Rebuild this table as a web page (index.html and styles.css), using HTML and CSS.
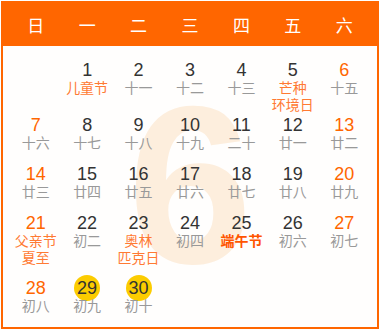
FILE: index.html
```html
<!DOCTYPE html>
<html lang="zh-CN">
<head>
<meta charset="utf-8">
<title>六月</title>
<link rel="stylesheet" href="styles.css">
</head>
<body>
<div class="cal">
  <div class="head">
    <span>日</span><span>一</span><span>二</span><span>三</span><span>四</span><span>五</span><span>六</span>
  </div>
  <div class="body">
    <div class="mark">6</div>
    <div class="grid">
      <div class="week w1">
        <div class="day"></div>
        <div class="day"><div class="num">1</div><div class="lunar fest">儿童节</div></div>
        <div class="day"><div class="num">2</div><div class="lunar">十一</div></div>
        <div class="day"><div class="num">3</div><div class="lunar">十二</div></div>
        <div class="day"><div class="num">4</div><div class="lunar">十三</div></div>
        <div class="day"><div class="num">5</div><div class="lunar fest">芒种<br>环境日</div></div>
        <div class="day"><div class="num we">6</div><div class="lunar">十五</div></div>
      </div>
      <div class="week">
        <div class="day"><div class="num we">7</div><div class="lunar">十六</div></div>
        <div class="day"><div class="num">8</div><div class="lunar">十七</div></div>
        <div class="day"><div class="num">9</div><div class="lunar">十八</div></div>
        <div class="day"><div class="num">10</div><div class="lunar">十九</div></div>
        <div class="day"><div class="num">11</div><div class="lunar">二十</div></div>
        <div class="day"><div class="num">12</div><div class="lunar">廿一</div></div>
        <div class="day"><div class="num we">13</div><div class="lunar">廿二</div></div>
      </div>
      <div class="week">
        <div class="day"><div class="num we">14</div><div class="lunar">廿三</div></div>
        <div class="day"><div class="num">15</div><div class="lunar">廿四</div></div>
        <div class="day"><div class="num">16</div><div class="lunar">廿五</div></div>
        <div class="day"><div class="num">17</div><div class="lunar">廿六</div></div>
        <div class="day"><div class="num">18</div><div class="lunar">廿七</div></div>
        <div class="day"><div class="num">19</div><div class="lunar">廿八</div></div>
        <div class="day"><div class="num we">20</div><div class="lunar">廿九</div></div>
      </div>
      <div class="week w4">
        <div class="day"><div class="num we">21</div><div class="lunar fest">父亲节<br>夏至</div></div>
        <div class="day"><div class="num">22</div><div class="lunar">初二</div></div>
        <div class="day"><div class="num">23</div><div class="lunar fest">奥林<br>匹克日</div></div>
        <div class="day"><div class="num">24</div><div class="lunar">初四</div></div>
        <div class="day"><div class="num">25</div><div class="lunar fest major">端午节</div></div>
        <div class="day"><div class="num">26</div><div class="lunar">初六</div></div>
        <div class="day"><div class="num we">27</div><div class="lunar">初七</div></div>
      </div>
      <div class="week">
        <div class="day"><div class="num we">28</div><div class="lunar">初八</div></div>
        <div class="day"><div class="num"><span class="today">29</span></div><div class="lunar">初九</div></div>
        <div class="day"><div class="num"><span class="today">30</span></div><div class="lunar">初十</div></div>
        <div class="day"></div>
        <div class="day"></div>
        <div class="day"></div>
        <div class="day"></div>
      </div>
    </div>
  </div>
</div>
</body>
</html>
```
FILE: styles.css
```css
* { box-sizing: border-box; }
html, body { margin: 0; padding: 0; background: #fff; }
body { font-family: "Liberation Sans", "Noto Sans CJK SC", sans-serif; }

.cal {
  margin: 1px;
  width: 378px;
  height: 328px;
  border: 2px solid #ff6600;
  display: flex;
  flex-direction: column;
  background: #fffefd;
}

.head {
  height: 43px;
  background: #ff6600;
  display: grid;
  grid-template-columns: repeat(7, 1fr);
  padding: 0 7px;
  align-items: center;
  color: #fff;
  font-family: "Noto Sans CJK SC", sans-serif;
  font-size: 17px;
  text-align: center;
}

.body {
  position: relative;
  flex: 1;
  padding: 15px 7px 0;
  overflow: hidden;
}

.mark {
  position: absolute;
  left: 50%;
  top: 27px;
  transform: translateX(-50%);
  font-family: "Liberation Sans", sans-serif;
  font-weight: bold;
  font-size: 224px;
  line-height: 1;
  color: #fdeedd;
}

.grid {
  position: relative;
  display: grid;
  grid-template-rows: 55px 49px 49px 65px 49px;
}

.week {
  display: grid;
  grid-template-columns: repeat(7, 1fr);
  align-items: start;
}

.day {
  text-align: center;
}

.num {
  height: 18px;
  line-height: 18px;
  font-size: 18px;
  color: #333;
  display: flex;
  justify-content: center;
  align-items: center;
}

.num.we { color: #ff6600; }

.today {
  flex: none;
  width: 26px;
  height: 26px;
  border-radius: 50%;
  background: #fccc00;
  display: flex;
  align-items: center;
  justify-content: center;
  color: #333;
}

.lunar {
  font-family: "Noto Sans CJK SC", sans-serif;
  font-size: 14px;
  line-height: 17px;
  color: #999;
}

.lunar.fest { color: #ff7a33; }
.lunar.fest.major { color: #ff5500; font-weight: bold; }
```
